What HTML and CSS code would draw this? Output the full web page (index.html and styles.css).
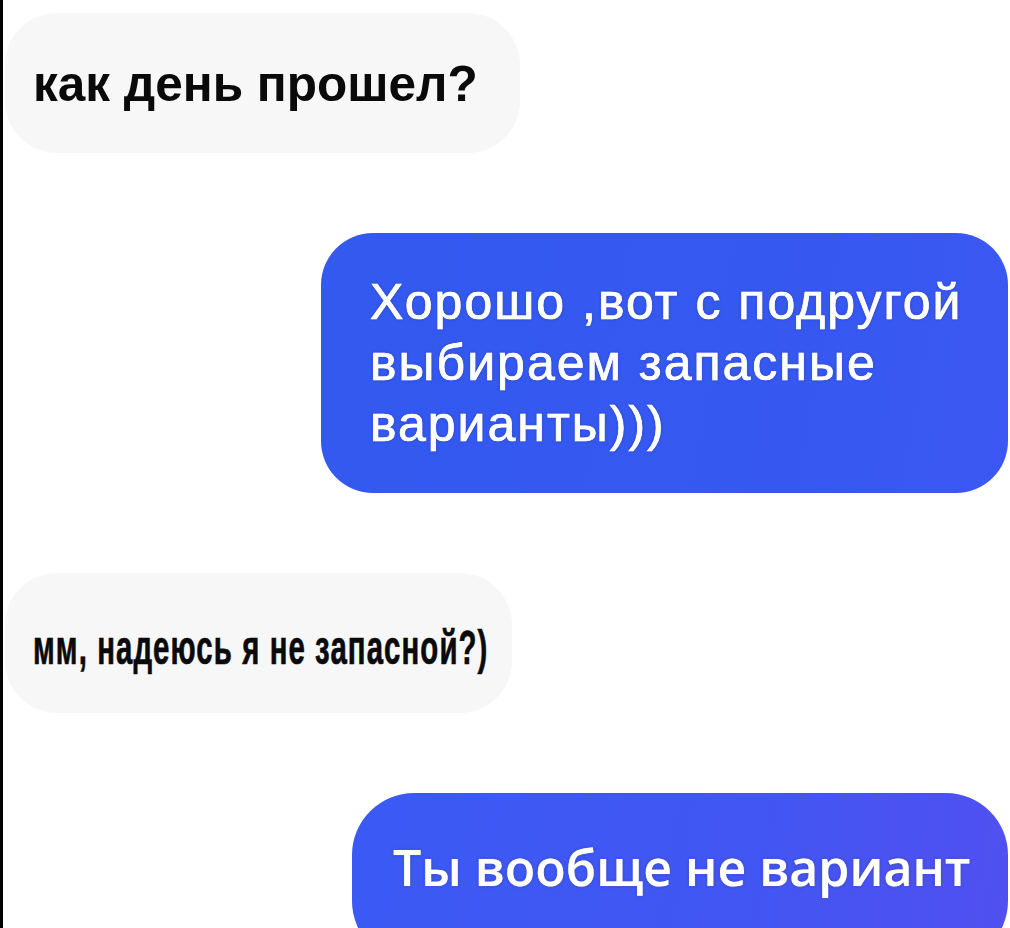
FILE: index.html
```html
<!DOCTYPE html>
<html lang="ru">
<head>
  <meta charset="UTF-8">
  <meta name="viewport" content="width=device-width, initial-scale=1.0">
  <title>Переписка</title>
  <link rel="stylesheet" href="styles.css">
</head>
<body>
  <div class="chat">
    <div class="msg msg-in msg-first">
      <p class="text-bold">как день прошел?</p>
    </div>
    <div class="msg msg-out msg-wide">
      <p class="text-plain">Хорошо ,вот с подругой<br>выбираем запасные<br>варианты)))</p>
    </div>
    <div class="msg msg-in msg-second">
      <p class="text-narrow">мм, надеюсь я не запасной?)</p>
    </div>
    <div class="msg msg-out msg-last">
      <p class="text-semi">Ты вообще не вариант</p>
    </div>
  </div>
</body>
</html>
```

FILE: styles.css
```css
html, body {
  margin: 0;
  padding: 0;
  height: 100%;
  overflow: hidden;
  background: #fff;
}
body {
  border-left: 3px solid #000;
  box-sizing: border-box;
}
.chat {
  display: flex;
  flex-direction: column;
  gap: 80px;
  padding: 13px 2px 0 2px;
}
.msg {
  display: flex;
  align-items: center;
  box-sizing: border-box;
}
.msg p {
  margin: 0;
  white-space: nowrap;
}
.msg-in {
  align-self: flex-start;
  background: #f7f7f7;
  border-radius: 52px;
  height: 140px;
  padding-left: 28px;
  color: #0a0a0a;
}
.msg-first {
  width: 515px;
}
.msg-second {
  width: 507px;
  padding-top: 10px;
}
.msg-out {
  align-self: flex-end;
  color: #fff;
  border-radius: 52px;
  text-shadow: 0 0 1px rgba(255, 255, 255, 0.7), 0 0 3px rgba(10, 20, 80, 0.45);
}
.msg-wide {
  width: 687px;
  height: 260px;
  padding-left: 49px;
  background: linear-gradient(100deg, #3359ef 0%, #3658f1 70%, #3c57f3 100%);
}
.msg-last {
  width: 656px;
  height: 170px;
  padding-left: 41px;
  align-items: flex-start;
  padding-top: 40px;
  border-radius: 62px;
  background: linear-gradient(100deg, #3b5af5 0%, #4256f3 60%, #5150f0 100%);
}
.text-bold {
  font-family: "Liberation Sans", Arial, sans-serif;
  font-weight: bold;
  font-size: 49.5px;
}
.text-plain {
  font-family: "Liberation Sans", Arial, sans-serif;
  font-size: 50px;
  line-height: 61px;
  letter-spacing: 2px;
  -webkit-text-stroke: 0.7px #fff;
}
/* condensed look: regular bold squeezed horizontally, a bit taller */
.text-narrow {
  font-family: "Liberation Sans", Arial, sans-serif;
  font-weight: bold;
  font-size: 41px;
  letter-spacing: 1.5px;
  -webkit-text-stroke: 0.6px #0a0a0a;
  transform: scale(0.717, 1.15);
  transform-origin: left center;
}
.text-semi {
  font-family: "Open Sans", sans-serif;
  font-weight: 600;
  font-size: 50px;
  line-height: 68px;
}
```
